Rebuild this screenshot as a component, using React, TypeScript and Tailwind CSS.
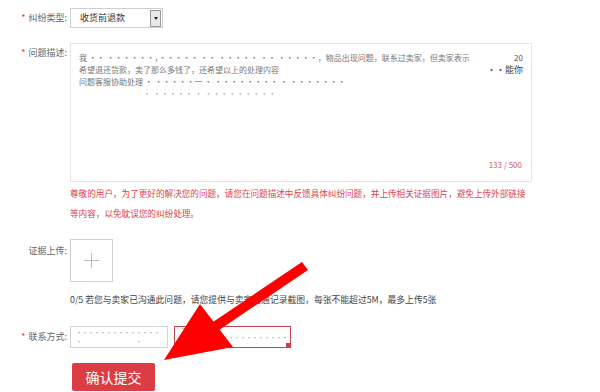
import React from 'react';

const font = { fontFamily: '"Noto Sans CJK SC", "Noto Sans", sans-serif' };

function Label({ text, star = true, className = '' }: { text: string; star?: boolean; className?: string }) {
    return (
        <div className={`flex w-[70px] shrink-0 justify-end pr-[3px] text-[9px] leading-[12px] text-[#666] ${className}`}>
            {star && <span className="mr-[3px] text-[#e4393c]">*</span>}
            <span>{text}</span>
        </div>
    );
}

export default function App() {
    return (
        <div className="relative h-[392px] w-[600px] overflow-hidden bg-white" style={font}>
            <div className="flex flex-col pt-[8px]">
                {/* 纠纷类型 */}
                <div className="flex items-center">
                    <Label text="纠纷类型:" />
                    <div className="flex h-[20px] w-[93px] items-center border border-[#cfcfcf] bg-white">
                        <span className="flex-1 pl-[9px] text-[9px] text-[#333]">收货前退款</span>
                        <div className="mr-[1px] flex h-[17px] w-[11px] items-center justify-center border border-[#999] bg-[#e8e8e8]">
                            <div className="h-0 w-0 border-x-[2.5px] border-t-[3px] border-x-transparent border-t-[#222]" />
                        </div>
                    </div>
                </div>

                {/* 问题描述 */}
                <div className="mt-[15px] flex items-start">
                    <Label text="问题描述:" className="mt-[4px]" />
                    <div className="flex flex-col">
                        <div className="relative h-[139px] w-[462px] border border-[#e6e6e6] px-[8px] pt-[8px] text-[8px] leading-[12px] text-[#777]">
                            <div className="flex justify-between whitespace-nowrap">
                                <span>我 ·· ······，····· ·· ····· ·· ·····，物品出现问题，联系过卖家，但卖家表示</span>
                                <span className="text-[#555]">20</span>
                            </div>
                            <div className="flex justify-between whitespace-nowrap">
                                <span>希望退还货款，卖了那么多钱了，还希望以上的处理内容</span>
                                <span className="text-[9px] text-[#444]">··能你</span>
                            </div>
                            <div className="whitespace-nowrap">问题客服协助处理 · ·····一 · ········ · ·······</div>
                            <div className="whitespace-nowrap pl-[64px] text-[#aaa]">· ····· · ·········</div>
                            <div className="absolute bottom-[10px] right-[9px] text-[8px] text-[#c0606a]">133 / 500</div>
                        </div>
                        <div className="mt-[1px] w-[462px] text-[8.6px] leading-[20px] text-[#e2404e]">
                            尊敬的用户，为了更好的解决您的问题，请您在问题描述中反馈具体纠纷问题，并上传相关证据图片，避免上传外部链接等内容，以免耽误您的纠纷处理。
                        </div>
                    </div>
                </div>

                {/* 证据上传 */}
                <div className="mt-[16px] flex items-start">
                    <Label text="证据上传:" star={false} className="mt-[6px]" />
                    <div className="flex flex-col">
                        <div className="flex h-[43px] w-[43px] items-center justify-center border border-[#d0d0d0]">
                            <svg width="15" height="15" viewBox="0 0 15 15">
                                <path d="M7.5 0v15M0 7.5h15" stroke="#bbb" strokeWidth="1" />
                            </svg>
                        </div>
                        <div className="mt-[12px] text-[8.8px] leading-[12px] text-[#444]">
                            0/5 若您与卖家已沟通此问题，请您提供与卖家沟通记录截图，每张不能超过5M，最多上传5张
                        </div>
                    </div>
                </div>

                {/* 联系方式 */}
                <div className="mt-[20px] flex items-center">
                    <Label text="联系方式:" />
                    <div className="flex gap-[6px]">
                        <div className="flex h-[22px] w-[98px] items-center justify-between border border-[#d4d4d4] px-[5px] text-[6px] text-[#999]">
                            <span>·········· ·</span>
                            <span>···· ·</span>
                        </div>
                        <div className="relative flex h-[22px] w-[117px] items-center justify-between border border-[#c9434c] px-[5px] text-[6px] text-[#999]">
                            <span>· ················ · ···</span>
                            <span>···</span>
                            <div className="absolute bottom-0 right-0 h-[4px] w-[4px] bg-[#c9434c]" />
                        </div>
                    </div>
                </div>

                {/* 提交 */}
                <div className="mt-[15px] flex">
                    <div className="w-[72px] shrink-0" />
                    <button className="flex h-[28px] w-[83px] items-center justify-center rounded-[2px] bg-[#dc3c44] text-[14px] text-white">
                        确认提交
                    </button>
                </div>
            </div>

            {/* red arrow annotation */}
            <svg className="pointer-events-none absolute left-0 top-0" width="600" height="392" viewBox="0 0 600 392">
                <polygon points="302,262 308,270 219,330 213,322" fill="#ff0000" />
                <polygon points="164,360 200,304 233,347" fill="#ff0000" />
            </svg>
        </div>
    );
}
